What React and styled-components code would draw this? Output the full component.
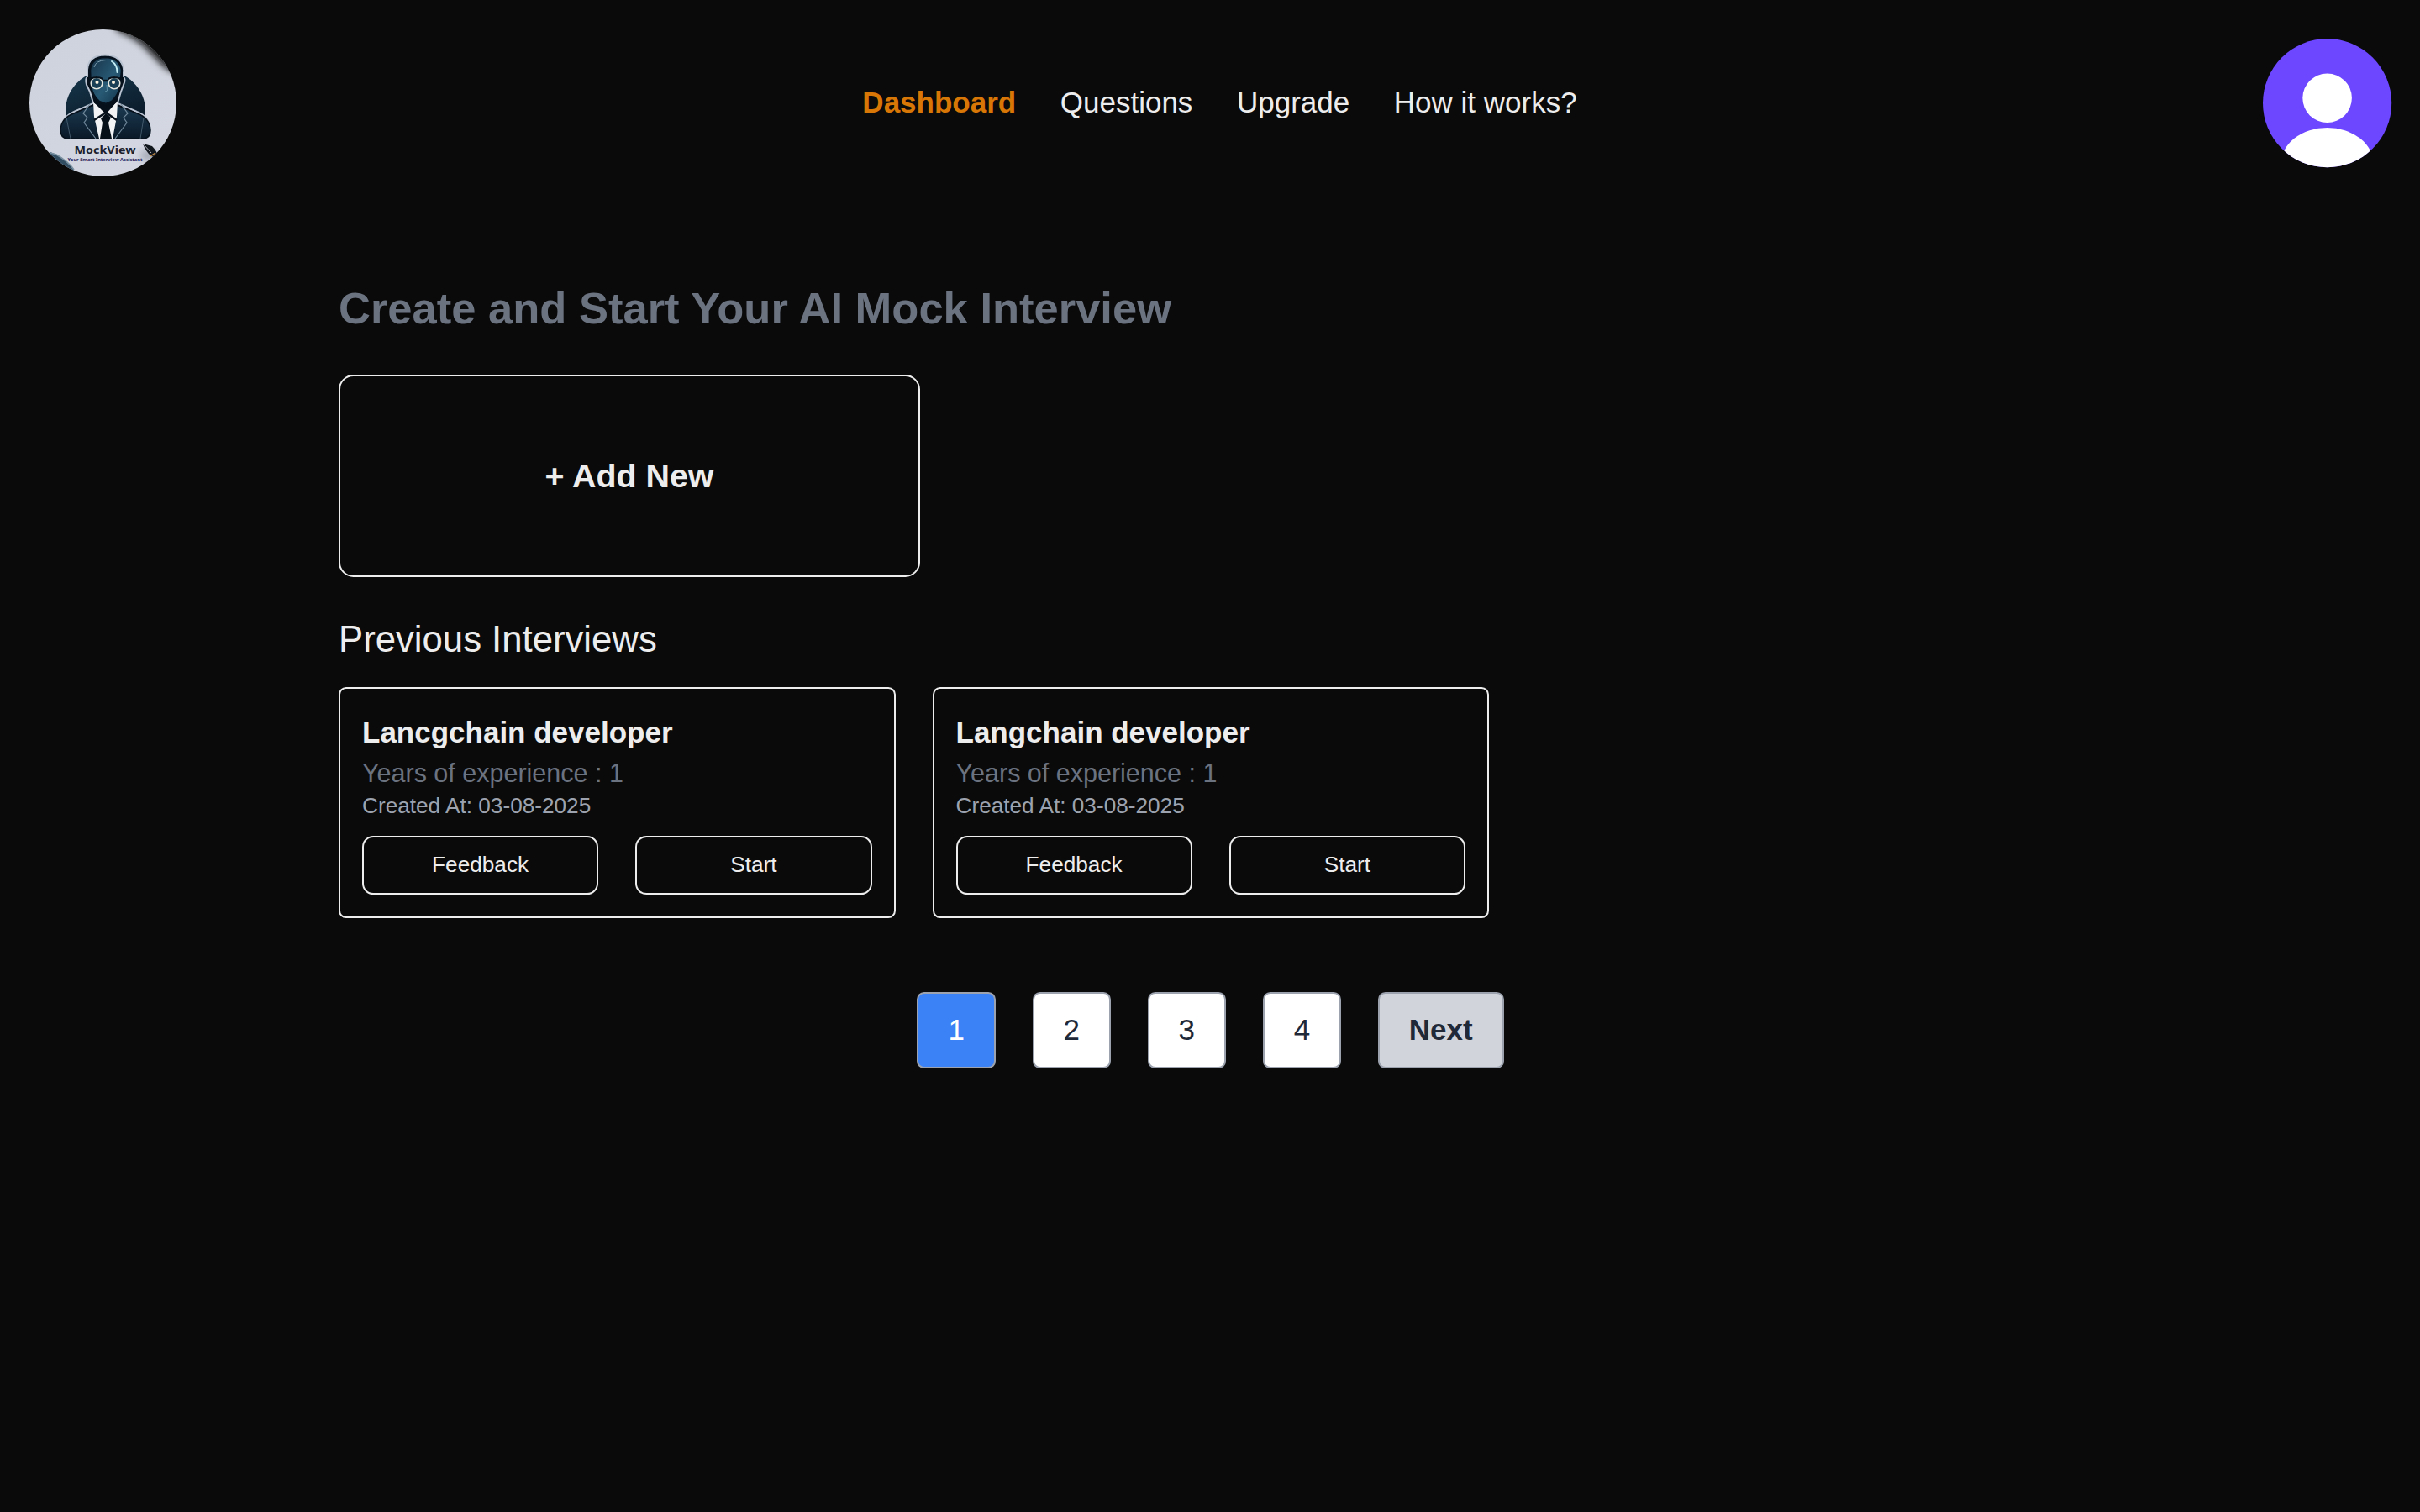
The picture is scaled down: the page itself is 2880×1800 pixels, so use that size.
import React from "react";
import styled, { createGlobalStyle, css } from "styled-components";

const Global = createGlobalStyle`
  *, *::before, *::after { box-sizing: border-box; }
  body {
    margin: 0;
    background: #0a0a0a;
    color: #ededed;
    font-family: "Liberation Sans", Arial, Helvetica, sans-serif;
    font-size: 35px;
    line-height: 52.8px;
  }
  h2, h3, p, ul { margin: 0; padding: 0; font-weight: 400; }
  button { font: inherit; color: inherit; cursor: pointer; }
`;

const Header = styled.header`
  display: flex;
  align-items: center;
  justify-content: space-between;
  height: 245px;
  padding: 0 33px 0 35px;
`;

const Nav = styled.ul`
  display: flex;
  gap: 52.6px;
  list-style: none;
`;

const NavItem = styled.li`
  ${(p) => p.$active && css`
    color: #d97706;
    font-weight: 700;
  `}
`;

const Logo = styled.svg`
  display: block;
  width: 175px;
  height: 175px;
`;

const Avatar = styled.svg`
  display: block;
  width: 154px;
  height: 154px;
`;

const Main = styled.main`
  padding: 87px 403px 0;
`;

const Title = styled.h2`
  color: #6b7280;
  font-size: 52.5px;
  line-height: 70px;
  font-weight: 700;
`;

const AddCard = styled.button`
  display: flex;
  align-items: center;
  justify-content: center;
  width: 692px;
  height: 241px;
  margin-top: 44px;
  padding: 0 0 1px;
  border: 2px solid #ededed;
  border-radius: 17.6px;
  background: transparent;
  font-size: 39.4px;
  font-weight: 700;
`;

const Subtitle = styled.h2`
  margin-top: 43px;
  font-size: 43.7px;
  line-height: 61px;
`;

const Cards = styled.section`
  display: grid;
  grid-template-columns: repeat(2, 662.5px);
  gap: 44px;
  margin-top: 27px;
`;

const Card = styled.article`
  height: 275px;
  padding: 26px;
  border: 2px solid #ededed;
  border-radius: 8.8px;
`;

const CardTitle = styled.h3`
  font-size: 35px;
  font-weight: 700;
  line-height: 52.8px;
`;

const Experience = styled.p`
  color: #6b7280;
  font-size: 30.5px;
  line-height: 43.5px;
`;

const Created = styled.p`
  color: #9ca3af;
  font-size: 26.2px;
  line-height: 35.2px;
`;

const Actions = styled.div`
  display: grid;
  grid-template-columns: 1fr 1fr;
  gap: 44px;
  margin-top: 17.5px;
`;

const Action = styled.button`
  height: 70px;
  padding: 0 0 1px;
  border: 2px solid #ededed;
  border-radius: 13.2px;
  background: transparent;
  font-size: 26.2px;
  line-height: 35.2px;
`;

const Pager = styled.nav`
  display: flex;
  justify-content: center;
  gap: 43.6px;
  margin-top: 88px;
  padding-left: 1px;
`;

const Page = styled.button`
  height: 91px;
  padding: 0 35px;
  border: 2px solid #9ca3af;
  border-radius: 8.8px;
  color: ${(p) => (p.$active ? "#ffffff" : "#1f2937")};
  background: ${(p) => (p.$active ? "#3b82f6" : "#ffffff")};
`;

const Next = styled(Page)`
  background: #d1d5db;
  font-weight: 700;
`;

function MockViewLogo() {
  return (
    <Logo viewBox="0 0 175 175" role="img" aria-label="MockView">
      <defs>
        <clipPath id="round"><circle cx="87.5" cy="87.5" r="87.5" /></clipPath>
        <clipPath id="aboveName"><rect width="175" height="129" /></clipPath>
        <linearGradient id="paper" x1="0" y1="0" x2="1" y2="1">
          <stop offset="0" stopColor="#cdd2dc" />
          <stop offset="1" stopColor="#d5d8e2" />
        </linearGradient>
        <linearGradient id="disc" x1="0" y1="0" x2="0.3" y2="1">
          <stop offset="0" stopColor="#17384d" />
          <stop offset="1" stopColor="#07121f" />
        </linearGradient>
        <linearGradient id="skin" x1="0" y1="0" x2="1" y2="1">
          <stop offset="0" stopColor="#173247" />
          <stop offset="0.55" stopColor="#285a75" />
          <stop offset="1" stopColor="#123147" />
        </linearGradient>
        <linearGradient id="suit" x1="0" y1="0" x2="0" y2="1">
          <stop offset="0" stopColor="#1c3b52" />
          <stop offset="1" stopColor="#0a1928" />
        </linearGradient>
        <filter id="soft" x="-30%" y="-30%" width="160%" height="160%"><feGaussianBlur stdDeviation="4" /></filter>
      </defs>
      <g clipPath="url(#round)">
        <rect width="175" height="175" fill="url(#paper)" />
        <path d="M98 -12 L106 2 Q130 11 144 28 L162 46 L195 62 L190 -20 Z" fill="#08090b" filter="url(#soft)" />
        <ellipse cx="142" cy="150" rx="10" ry="6" fill="#7f8591" opacity="0.6" filter="url(#soft)" />
        <path d="M25 146 L32 149 Q46 157 53 167 L54 175 L20 175 Z" fill="#314d62" />
        <path d="M25 147 L32 149 Q46 157 53 167" fill="none" stroke="#7890a0" strokeWidth="1.5" />
        <g clipPath="url(#aboveName)">
          <circle cx="90.5" cy="97" r="47.5" fill="url(#disc)" />
        </g>
        <path d="M69 48 Q70 31 90 30.500 Q110 31 112 48 L112 57 Q115 59 112 66 L109 74 Q106 84 105 88 L128 98 Q143 104 144 120 Q144 130 136 130 L45 130 Q37 129 37 120 Q38 105 53 98 L76 88 L72 74 L68 66 Q66 58 69 57 Z" fill="#07121d" stroke="#b8c2d0" strokeWidth="2" />
        <path d="M37 120 Q38 105 53 100 L76 90 L90 130 L45 130 Q37 129 37 120 Z" fill="url(#suit)" stroke="#07121d" strokeWidth="1.500" />
        <path d="M144 120 Q143 105 128 100 L104 90 L91 130 L136 130 Q144 129 144 120 Z" fill="url(#suit)" stroke="#07121d" strokeWidth="1.500" />
        <path d="M76 87 L91 97 L105 86 L104 104 L99 130 L83 130 L77 104 Z" fill="#f1f3f5" />
        <path d="M77 87 L91 101 L104 86 L103 80 L78 80 Z" fill="#06101a" />
        <path d="M91 100 L97 105 L94 111 L98 130 L84 130 L87 111 L85 106 Z" fill="#061019" />
        <path d="M77 108 L91 99 L104 108" fill="none" stroke="#07121d" strokeWidth="2.500" />
        <path d="M72 89 L64 100 L69 105 L65 111 L79 130 M109 89 L117 100 L112 105 L116 111 L102 130" fill="none" stroke="#6f8799" strokeWidth="1.2" />
        <path d="M44 105 L49 130 M136 105 L132 130" stroke="#4e6677" strokeWidth="0.8" />
        <path d="M72 49 Q73 33.500 90 33 Q108 33.500 110 49 L108 68 Q106 79 98 86 L91 89 L83 86 Q75 79 73 68 Z" fill="url(#skin)" stroke="#06121e" strokeWidth="2.500" />
        <path d="M77 45 Q79 37 91 36.500" fill="none" stroke="#7fa0b2" strokeWidth="1" />
        <path d="M98 38 Q104.500 42 104.500 51" fill="none" stroke="#c4eef5" strokeWidth="2" strokeLinecap="round" />
        <path d="M68 58 L74 58.500 M87 61 L94 61 M107 58.500 L113 58" fill="none" stroke="#06101b" strokeWidth="2.500" />
        <circle cx="80" cy="64" r="6.800" fill="#1a4055" stroke="#e1e5dd" strokeWidth="1.600" />
        <circle cx="101" cy="64" r="6.800" fill="#1a4055" stroke="#e1e5dd" strokeWidth="1.600" />
        <path d="M72.500 59 Q80 55 87.500 59 M93.500 59 Q101 55 108.500 59" fill="none" stroke="#06101b" strokeWidth="2" />
        <circle cx="80.500" cy="63" r="2" fill="#fff5df" />
        <circle cx="100" cy="63" r="2" fill="#fff5df" />
        <path d="M92 66 L92.500 73 L90 74" fill="none" stroke="#5c8da3" strokeWidth="1" />
        <path d="M135 136 L146 139 Q153 146 153 153 L145 151 Q138 145 135 136 Z" fill="#11151c" />
        <path d="M136 137 L145 147" stroke="#d8dbe2" strokeWidth="0.8" />
        <path d="M144 151 L150 147" stroke="#c38a44" strokeWidth="1.5" />
      </g>
      <text x="90" y="148" textAnchor="middle" textLength="73" lengthAdjust="spacingAndGlyphs" fontFamily="Noto Sans, sans-serif" fontSize="13" fontWeight="700" fill="#1a202e">MockView</text>
      <text x="90" y="157" textAnchor="middle" textLength="89" lengthAdjust="spacingAndGlyphs" fontFamily="Noto Sans, sans-serif" fontSize="6" fontWeight="700" fill="#26235e">Your Smart Interview Assistant</text>
    </Logo>
  );
}

function UserAvatar() {
  return (
    <Avatar viewBox="0 0 154 154" role="img" aria-label="Account">
      <defs><clipPath id="user"><circle cx="76.600" cy="76.700" r="76.600" /></clipPath></defs>
      <g clipPath="url(#user)">
        <rect width="154" height="154" fill="#6c47ff" />
        <circle cx="76.600" cy="70.800" r="29.300" fill="#fff" />
        <ellipse cx="76.600" cy="149" rx="55" ry="43" fill="#fff" />
      </g>
    </Avatar>
  );
}

const links = ["Dashboard", "Questions", "Upgrade", "How it works?"];
const interviews = [
  { role: "Lancgchain developer", years: 1, created: "03-08-2025" },
  { role: "Langchain developer", years: 1, created: "03-08-2025" },
];

export default function App() {
  return (
    <>
      <Global />
      <Header>
        <MockViewLogo />
        <Nav>
          {links.map((l, i) => <NavItem key={l} $active={i === 0}>{l}</NavItem>)}
        </Nav>
        <UserAvatar />
      </Header>
      <Main>
        <Title>Create and Start Your AI Mock Interview</Title>
        <AddCard>+ Add New</AddCard>
        <Subtitle>Previous Interviews</Subtitle>
        <Cards>
          {interviews.map((it) => (
            <Card key={it.role}>
              <CardTitle>{it.role}</CardTitle>
              <Experience>{`Years of experience : ${it.years}`}</Experience>
              <Created>{`Created At: ${it.created}`}</Created>
              <Actions>
                <Action>Feedback</Action>
                <Action>Start</Action>
              </Actions>
            </Card>
          ))}
        </Cards>
        <Pager>
          {[1, 2, 3, 4].map((n) => <Page key={n} $active={n === 1}>{n}</Page>)}
          <Next>Next</Next>
        </Pager>
      </Main>
    </>
  );
}
